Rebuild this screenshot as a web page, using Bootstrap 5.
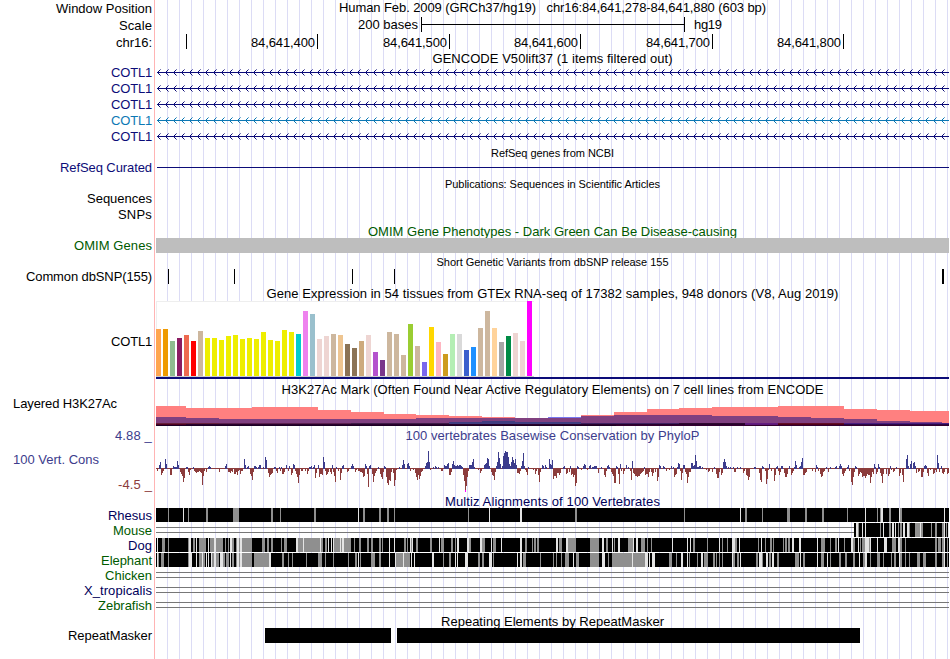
<!DOCTYPE html>
<html lang="en">
<head>
  <meta charset="UTF-8" />
  <meta name="viewport" content="width=device-width, initial-scale=1" />
  <title>chr16:84,641,278-84,641,880 - Genome Browser</title>
  <link href="https://cdn.jsdelivr.net/npm/bootstrap@5.3.3/dist/css/bootstrap.min.css" rel="stylesheet" />
  <style>
    body { font-family: "Liberation Sans", Arial, sans-serif; font-size: 13px; color: #000; background: #fff; }
    .browser { width: 949px; height: 659px; }
    .side { width: 154px; padding-right: 2px; white-space: pre; }
    .side-left { justify-content: flex-start !important; padding-left: 13px; }
    .lane {
      border-left: 1px solid #ffb4b4;
      padding-left: 1px;
      background: linear-gradient(to right, #dcdcf5 1px, transparent 1px) 11px 0 / 12px 100% content-box content-box;
      white-space: pre;
    }
    .lane svg { display: block; }
    .fine { font-size: 11px; }
    .navy { color: #0c0c78; }
    .teal { color: #0c78b4; }
    .green { color: #005a00; }
    .species { color: #00005a; }
    .cons { color: #3c3c8c; }
    .neg { color: #8c3c3c; }
    /* centred texts move down by half of this padding */
    .drop1 { padding-top: 2px; }
    .drop2 { padding-top: 4px; }
    .cons-label { padding: 6px 0 0 13px; }
    .neg-label { margin-bottom: -2px; }
    .h3k-label { margin-top: -3px; }
    .h13 { height: 13px; } .h14 { height: 14px; } .h15 { height: 15px; } .h16 { height: 16px; }
    .h17 { height: 17px; } .h18 { height: 18px; } .h48 { height: 48px; }
    .h29 { height: 29px; } .h78 { height: 78px; }
  </style>
</head>
<body>
  <div class="browser d-flex flex-column overflow-hidden" id="browser"></div>

  <script>
    const X0 = 156, W = 793;

    const rect = (x, y, w, h, fill) => `<rect x="${x}" y="${y}" width="${w}" height="${h}" fill="${fill}"/>`;
    const svg = (h, body) => `<svg width="${W}" height="${h}" viewBox="${X0} 0 ${W} ${h}" shape-rendering="crispEdges">${body}</svg>`;
    const label = (x, y, w, s) => `<text x="${x}" y="${y}" font-size="13" textLength="${w}">${s}</text>`;
    const fit = (s, w, cls = '') => `<span class="${cls}" data-w="${w}">${s}</span>`;

    // one row of the browser: label cell on the left, drawing lane on the right
    function row(h, side, lane, sideClass = '') {
      return `<div class="d-flex flex-shrink-0 h${h}">
        <div class="side flex-shrink-0 d-flex align-items-center justify-content-end ${sideClass}">${side}</div>
        <div class="lane flex-grow-1 d-flex align-items-center justify-content-center">${lane}</div></div>`;
    }

    // ruler
    function scaleBar() {
      return svg(17, label(358, 13, 60, '200 bases') + rect(421, 1, 1, 15, '#000') + rect(421, 8, 264, 1, '#000') +
        rect(684, 1, 1, 15, '#000') + label(694, 13, 28, 'hg19'));
    }
    function positions() {
      let s = rect(186, 1, 1, 15, '#000');
      [[317, '400'], [449, '500'], [580, '600'], [712, '700'], [843, '800']].forEach(([x, n]) => {
        s += rect(x, 1, 1, 15, '#000') + label(x - 66, 14, 64, '84,641,' + n);
      });
      return svg(17, s);
    }

    // intron line with strand arrows every 8px
    function gene(color) {
      let s = rect(157, 8, 792, 1, color);
      for (let x = 157; x < 949; x += 8) {
        s += rect(x, 8, 1, 1, color) + rect(x + 1, 7, 1, 3, color) + rect(x + 2, 6, 1, 1, color) + rect(x + 2, 10, 1, 1, color) +
          `<g opacity=".55">${rect(x + 3, 5, 1, 1, color)}${rect(x + 3, 11, 1, 1, color)}</g>`;
      }
      return svg(16, s);
    }

    // GTEx: height and colour of each tissue
    const tissues = `47 FFA54F,47 EE9A00,35 8FBC8F,38 8B1C62,41 EE6A50,35 FF0000,45 CDB79E,38 EEEE00,38 EEEE00,36 EEEE00,
      40 EEEE00,41 EEEE00,37 EEEE00,38 EEEE00,37 EEEE00,44 EEEE00,36 EEEE00,35 EEEE00,46 EEEE00,44 EEEE00,42 00CDCD,
      65 EE82EE,62 9AC0CD,37 EED5D2,40 EED5D2,42 CDB79E,41 EEC591,32 8B7355,28 8B7355,35 CDAA7D,41 EED5D2,24 B452CD,
      16 7A378B,44 CDB79E,42 CDB79E,21 CDB79E,52 9ACD32,30 CDB79E,14 7A67EE,49 FFD700,34 FFB6C1,22 CD9B1D,42 B4EEB4,
      42 D9D9D9,26 3A5FCD,29 1E90FF,48 CDB79E,65 CDB79E,48 FFD39B,34 A6A6A6,40 008B45,43 EED5D2,35 EED5D2,75 FF00FF`;
    function gtex() {
      let s = rect(156, 0, 378, 76, '#fff') + rect(156, 0, 378, 1, '#eee') + rect(156, 0, 1, 76, '#eee') + rect(156, 75, 378, 1, '#ccc');
      tissues.split(',').forEach((t, i) => {
        const [h, c] = t.trim().split(' ');
        s += rect(156 + i * 7, 75 - h, 5, h, '#' + c);
      });
      return svg(78, s + rect(156, 76, 793, 2, '#0c0c78'));
    }

    // layered H3K27Ac: [start x, top y] steps, each one filled down to the base line
    function steps(list, color, bottom) {
      return list.map(([x, y], i) => rect(x, y - 397, (list[i + 1] ? list[i + 1][0] : 949) - x, Math.max(0, bottom - y), color)).join('');
    }
    function h3k() {
      return svg(29,
        steps([[156, 406], [186, 408], [252, 407], [318, 410], [351, 412], [384, 414], [416, 415], [449, 416], [482, 417], [515, 418],
          [581, 415], [614, 412], [647, 409], [679, 408], [712, 407], [778, 406], [844, 409], [877, 410], [910, 411]], '#ff8080', 426) +
        steps([[156, 417], [186, 418], [219, 419], [416, 418], [581, 416], [614, 415], [712, 416], [778, 417], [811, 418],
          [844, 419], [877, 421], [910, 422], [942, 423]], '#804080', 426) +
        rect(548, 20, 33, 1, '#7878f0') +
        rect(449, 25, 33, 2, '#403c80') + rect(482, 24, 33, 3, '#403c80') + rect(515, 25, 66, 2, '#403c80') +
        rect(156, 26, 63, 1, '#66203c') + rect(219, 26, 132, 1, '#5c2050') + rect(351, 26, 98, 1, '#401c48') +
        rect(581, 26, 98, 1, '#402060') + rect(679, 26, 66, 1, '#300830') + rect(745, 26, 33, 1, '#641c80') +
        rect(778, 26, 66, 1, '#640c28') + rect(844, 26, 105, 1, '#4c1c80') +
        rect(156, 27, 30, 1, '#500020') + rect(186, 27, 559, 1, '#28002c') + rect(745, 27, 33, 1, '#5c1878') +
        rect(778, 27, 66, 1, '#500018') + rect(844, 27, 105, 1, '#280848') +
        rect(156, 28, 460, 1, '#1c0024') + rect(616, 28, 333, 1, '#340030'));
    }

    // phyloP scores as "x height", positive up and negative down
    const phylo = `157 -2,159 3,160 6,161 -6,162 -4,163 -2,165 9,166 4,170 -6,171 -6,173 2,174 1,175 1,176 1,177 7,178 3,180 -3,181 -5,
182 -7,183 -13,184 -9,186 1,187 1,188 -3,189 -6,190 -1,193 1,194 -2,195 -3,196 -4,197 -3,198 -3,199 -2,200 -3,201 -4,202 -16,203 -7,
204 -2,206 -3,208 1,209 2,210 1,219 -3,225 2,226 4,228 -3,229 -3,230 -4,231 -2,232 -3,234 -5,235 -5,236 -3,237 -6,238 -2,239 -1,240 -5,
241 -2,242 -2,244 9,245 3,247 1,248 2,250 -5,251 -7,252 -11,253 -3,254 2,255 2,256 1,258 1,259 3,260 3,263 1,265 11,266 8,268 -4,
269 -8,270 -6,271 -5,272 -4,274 1,275 1,276 -2,277 -4,279 1,280 -2,281 1,282 -5,283 -5,284 -3,286 3,288 -2,289 2,291 -6,292 -4,293 4,
294 3,295 -2,296 -5,297 -8,298 -14,299 -6,301 -2,302 -2,305 -2,307 -5,308 -2,309 1,310 1,311 2,313 1,314 3,315 -9,316 -4,318 3,319 -8,
320 -5,321 -5,322 -6,323 11,324 6,325 -2,326 -6,327 -5,328 -3,330 -3,331 -5,332 3,333 -3,334 -7,335 -13,336 1,338 -2,340 -11,341 -4,
342 2,343 3,347 -3,348 -2,351 2,352 4,353 2,355 -3,356 -1,358 -2,359 -2,360 -3,361 -3,362 -4,363 -8,364 -7,365 4,366 2,367 -5,368 -18,
369 2,370 3,372 -5,373 -13,374 -7,375 -4,376 -2,378 1,380 -5,381 -8,382 -10,383 -3,384 2,385 1,386 -8,387 -14,388 -16,389 -11,390 -12,
391 -3,393 -4,394 -17,395 -11,396 -1,399 1,402 3,403 8,404 4,407 4,408 5,409 2,410 -2,413 -1,415 -4,416 -8,417 -11,418 -6,419 -10,
420 -7,421 -3,422 -2,425 2,426 5,427 6,428 17,429 6,430 -1,433 1,435 2,436 1,438 1,441 -2,442 -2,444 3,445 2,446 2,447 4,448 5,449 -6,
450 -6,451 -3,452 4,453 7,454 3,455 2,456 2,457 3,458 2,459 3,460 3,461 2,462 1,463 -6,464 -12,465 -22,466 -17,467 -8,468 -2,469 3,
470 3,471 3,472 6,473 9,474 1,478 -1,480 -4,481 -2,484 3,485 4,486 5,487 10,488 9,489 2,491 -3,492 -6,493 -7,494 -11,495 -3,496 2,497 6,
498 16,499 10,500 4,502 2,503 12,504 15,505 17,506 16,507 16,508 11,509 4,510 2,511 6,512 11,513 8,514 5,515 9,516 3,517 -4,518 -4,
519 -5,520 -2,521 2,522 7,523 15,524 2,525 -1,526 -3,527 -6,528 1,533 -1,535 -5,536 -2,538 -6,539 -13,540 -3,542 3,543 2,545 3,546 1,
549 9,550 4,551 3,552 8,553 -10,554 -7,555 -7,556 -9,557 -4,558 -4,559 -6,560 -4,563 1,564 2,566 -5,567 -4,569 -3,570 2,571 -6,572 -5,
573 -8,574 -6,575 -17,576 -14,577 2,578 1,581 -1,583 2,584 4,585 3,587 -1,589 2,590 3,592 1,593 1,594 2,595 2,596 2,598 -4,601 1,
604 -6,605 -8,606 -2,607 2,608 3,609 1,611 -3,612 -5,613 -7,614 -14,615 -14,616 2,617 1,618 -5,619 -15,620 4,621 -2,623 -5,624 -2,626 3,
628 1,630 -2,631 -11,632 7,633 -4,634 -5,635 -7,636 -7,637 -8,638 -7,639 -7,640 -5,641 -4,642 -3,643 -2,644 1,645 -6,646 -5,647 -5,
648 -8,649 -3,651 -3,652 -7,653 -4,655 -3,657 -12,658 -8,659 3,660 2,663 2,664 1,666 -2,669 -1,671 2,673 1,674 -8,675 -6,676 -5,677 1,
678 5,679 4,680 -2,681 -11,682 -4,683 3,684 3,685 -3,686 -5,687 -14,688 -8,689 -3,690 -3,691 5,692 5,693 2,694 3,695 13,696 7,697 1,
698 1,699 2,700 2,702 1,706 -1,708 -3,709 -2,712 -3,714 1,716 -5,717 -9,718 -9,719 -3,721 -6,722 -4,723 6,724 9,725 6,726 2,728 1,
730 1,733 1,734 -3,735 -3,737 1,740 1,743 -4,744 -2,746 -6,747 -7,748 -11,749 -8,754 1,755 1,759 -4,760 -11,761 -13,762 2,763 1,
765 -2,766 -15,767 -10,768 -1,769 4,771 -2,774 -12,775 -6,776 1,777 2,778 -2,779 -6,780 -3,781 2,782 2,784 -4,785 -8,786 -8,787 -5,
789 2,791 -6,792 -4,793 -2,794 1,795 7,796 3,799 1,800 2,801 6,802 10,803 -6,804 -6,805 -4,806 -3,812 -2,815 -3,816 3,817 1,818 -2,
820 -5,821 -8,822 -7,823 -3,824 -2,826 1,828 -3,830 1,835 1,836 2,839 2,840 4,841 2,842 -5,843 -7,844 -4,845 -2,847 1,848 3,849 -2,
851 -13,852 -16,853 -8,854 -3,855 2,856 1,858 -7,859 -5,860 -3,861 -4,862 -8,863 -7,864 -7,865 -9,866 -7,867 -5,868 -6,869 -6,870 -14,
871 -8,872 -3,873 -5,874 4,875 1,876 -5,877 -3,878 4,879 1,880 -4,881 -7,882 -14,883 -5,886 -5,888 -7,889 -5,890 2,891 -1,893 -3,
894 -2,896 1,899 -7,900 -4,902 -6,903 -13,906 9,907 13,908 2,910 4,911 7,913 5,914 6,915 2,916 -4,918 -3,919 -2,921 -8,922 -8,923 -3,
924 2,925 3,926 2,927 -4,928 -7,930 -1,933 -5,934 -4,935 -1,936 -3,937 13,938 5,939 -3,941 2,942 -4,943 -5,944 -3,947 -5,948 -4`;
    function phyloP() {
      let s = rect(156, 24, 793, 1, '#8c3c3c');
      phylo.split(',').forEach(p => {
        const [x, v] = p.trim().split(' ').map(Number);
        s += v > 0 ? rect(x, 24 - v, 1, v + 1, '#3c3c8c') : rect(x, 24, 1, 1 - v, '#8c3c3c');
      });
      return svg(48, s + rect(465, 46, 1, 2, '#f0f'));
    }

    // alignment rows: "x width" of the grey (g) and near-white (w) stripes over black
    const rhesus = `168g1 183w1 188g1 206g2 233g6 271g2 280g1 314g2 358w1 363g2 379g2 387g2 394g1 468g1 489w1 520w2 575g2 684g1 740w1
      745g2 762g1 787g3 805g2 822g2 847g1 865w1 877g1 880g1 881w2 889g2 899w1 900g2 944w1`;
    const mouse = `856w2 858g1 862w1 865w1 880g1 883w1 889g2 892w2 895w1 898g1 900g2 903w2 907w2 909g1 915g5 920w1 921g2 931g1 935g2
      942g2 944w1 946g1 948w1`;
    const dog = `157w1 162g3 168g1 188g1 189w2 193g2 196w1 199g7 208w1 210g2 212g2 214w2 216g7 225g1 228g1 230w2 232g2 236g1 237w2 239g1
      240w2 242g10 262g3 267g2 271g2 281g1 284g3 296w2 298g5 303w1 304g16 320w1 321g2 325g2 328w1 331w1 333w1 334g6 340w1 341g1 342w2
      344g6 350g1 354g1 359g2 367g2 371g2 379g2 382g1 389w1 394w1 404g2 407g1 410w1 411g1 412w1 416g2 430g2 439w1 441g3 451g2 455g1
      457w2 467w2 469g2 480w2 482g3 491w1 493g3 501w1 520w2 525g2 532g1 534g2 537g2 556w2 559g3 566w2 568g8 590g9 602w2 606g2 612w1
      614g1 618w2 628g2 630g3 633w1 636w2 641g4 647g1 651g1 672w1 687w1 690w1 693g2 707g1 719w1 722g1 727g1 732w3 735g2 739w1 758g1
      761w1 765g1 770g2 773g1 783g1 785g2 788g2 792w2 799w2 817w1 821g4 830g1 835g2 838w1 844g1 851w2 853g2 858w1 860g1 862g3 865w4
      869g1 870w1 877w1 884w3 892g4 898w2 900g2 905g1 935g2 938g3 942g2 944w1 947g1`;
    const elephant = `157w1 158g1 161g3 168g1 188g1 189w3 196w1 199g3 202w1 203g2 206w1 208w1 211w1 212g2 214w2 216g3 220w3 223g2 226g3
      230w1 232g2 236g1 237w2 239g1 240w2 242g10 254g15 269w2 282g2 288g1 292g1 306g1 318g4 325g1 333g1 348g1 355g2 358w1 360g1
      371g4 379g2 389w1 395w1 396g7 403w1 404g6 411w1 414w1 432w2 443g1 449g2 455w1 457w1 465w3 478g2 482g2 489w3 493g1 517w1
      520w2 523g3 540g1 553g1 556g1 561g1 565g4 573w1 576g3 590g9 602w3 608g1 612g20 632w1 633g12 645w3 649w1 652w3 669g3 676g1
      681w2 687w1 689g1 697g1 701w2 704g4 713g2 716g1 719g1 722g1 732w1 733g2 737g2 740w1 756g2 759w3 762g1 766w2 769g2 772w2
      777g2 795g4 800w1 803g2 817w1 821g3 827w1 830g1 839g2 845g2 853g2 859w1 863g2 865w2 870g1 877g3 883g1 891g1 894g2 899w1
      900g2 905g1 909g1 917g3 923g3 935g2 942g2 944w1 947g1`;
    function align(from, data) {
      let s = rect(from, 0, 949 - from, 14, '#000');
      data.trim().split(/\s+/).forEach(d => {
        const [, x, k, w] = d.match(/(\d+)([gw])(\d+)/);
        s += rect(x, 0, w, 14, k === 'g' ? '#8f8f8f' : '#e4e4e4');
      });
      return s;
    }
    const gap = w => rect(156, 4, w, 1, '#777') + rect(156, 9, w, 1, '#777');

    const snps = [168, 234, 352, 394].map(x => rect(x, 1, 1, 15, '#000')).join('') + rect(942, 1, 2, 15, '#000');

    document.getElementById('browser').innerHTML = [
      row(16, fit('Window Position', 96, 'drop1'), fit('Human Feb. 2009 (GRCh37/hg19)   chr16:84,641,278-84,641,880 (603 bp)', 427)),
      row(17, fit('Scale', 33, 'drop1'), scaleBar()),
      row(17, fit('chr16:', 36, 'drop1'), positions()),
      row(14, '', fit('GENCODE V50lift37 (1 items filtered out)', 240, 'drop2')),
      row(16, fit('COTL1', 41, 'drop1'), gene('#0c0c78'), 'navy'),
      row(16, fit('COTL1', 41, 'drop1'), gene('#0c0c78'), 'navy'),
      row(16, fit('COTL1', 41, 'drop1'), gene('#0c0c78'), 'navy'),
      row(16, fit('COTL1', 41, 'drop1'), gene('#0c78b4'), 'teal'),
      row(16, fit('COTL1', 41, 'drop1'), gene('#0c0c78'), 'navy'),
      row(15, '', `<div class="fine pt-1">${fit('RefSeq genes from NCBI', 123)}</div>`),
      row(16, fit('RefSeq Curated', 92, 'drop1'), svg(16, rect(157, 8, 792, 1, '#0c0c78')), 'navy'),
      row(15, '', `<div class="fine pt-1">${fit('Publications: Sequences in Scientific Articles', 215)}</div>`),
      row(16, fit('Sequences', 65, 'drop1'), ''),
      row(16, fit('SNPs', 34, 'drop1'), ''),
      row(16, '', fit('OMIM Gene Phenotypes - Dark Green Can Be Disease-causing', 369, 'green drop2')),
      row(15, fit('OMIM Genes', 78), svg(15, rect(156, 0, 793, 15, '#bebebe')), 'green'),
      row(15, '', `<div class="fine pt-1">${fit('Short Genetic Variants from dbSNP release 155', 232)}</div>`),
      row(17, fit('Common dbSNP(155)', 126), svg(17, snps)),
      row(16, '', fit('Gene Expression in 54 tissues from GTEx RNA-seq of 17382 samples, 948 donors (V8, Aug 2019)', 572, 'drop1')),
      row(78, fit('COTL1', 41, 'drop2'), gtex()),
      row(18, '', fit('H3K27Ac Mark (Often Found Near Active Regulatory Elements) on 7 cell lines from ENCODE', 542, 'drop2')),
      row(29, `<div class="align-self-start h3k-label">${fit('Layered H3K27Ac', 104)}</div>`, h3k(), 'side-left'),
      row(18, fit('4.88 _', 37, 'drop1'), fit('100 vertebrates Basewise Conservation by PhyloP', 294, 'cons drop1'), 'cons'),
      row(48, `<div class="d-flex flex-column justify-content-between h-100 w-100">
        <div class="cons cons-label">${fit('100 Vert. Cons', 86)}</div><div class="neg neg-label text-end">${fit('-4.5 _', 34)}</div></div>`, phyloP()),
      row(16, '', fit('Multiz Alignments of 100 Vertebrates', 215, 'species drop2')),
      row(15, fit('Rhesus', 44), svg(15, align(156, rhesus)), 'species'),
      row(15, fit('Mouse', 39), svg(15, gap(698) + align(854, mouse)), 'green'),
      row(15, fit('Dog', 24), svg(15, align(156, dog)), 'species'),
      row(15, fit('Elephant', 51), svg(15, align(156, elephant)), 'green'),
      row(15, fit('Chicken', 47), svg(15, gap(793)), 'green'),
      row(15, fit('X_tropicalis', 68), svg(15, gap(793)), 'species'),
      row(15, fit('Zebrafish', 54), svg(15, gap(793)), 'green'),
      row(15, '', fit('Repeating Elements by RepeatMasker', 223, 'drop1')),
      row(15, fit('RepeatMasker', 84), svg(15, rect(265, 0, 126, 15, '#000') + rect(397, 0, 463, 15, '#000'))),
      row(16, '', '')
    ].join('');

    // spread each text to its width
    document.querySelectorAll('[data-w]').forEach(el => {
      const extra = (el.dataset.w - el.getBoundingClientRect().width) / el.textContent.length;
      el.style.letterSpacing = extra + 'px';
    });
  </script>
  <script src="https://cdn.jsdelivr.net/npm/bootstrap@5.3.3/dist/js/bootstrap.bundle.min.js"></script>
</body>
</html>
